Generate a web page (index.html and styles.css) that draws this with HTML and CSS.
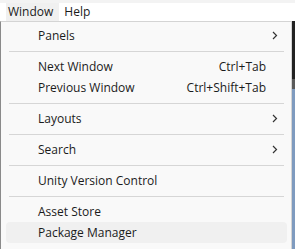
FILE: index.html
```html
<!DOCTYPE html>
<html lang="en">
<head>
    <meta charset="UTF-8" />
    <title>Window menu</title>
    <link rel="stylesheet" href="styles.css">
</head>
<body>
    <div class="top-strip"></div>
    <div class="menubar">
        <div class="menubar-item active">Window</div>
        <div class="menubar-item">Help</div>
    </div>

    <div class="workspace">
        <div class="menu">
            <div class="menu-item">
                <span class="label">Panels</span>
                <svg class="chevron" width="6" height="9" viewBox="0 0 6 9"><path d="M1 1 L4.5 4.5 L1 8" fill="none" stroke="#333" stroke-width="1.2"/></svg>
            </div>
            <div class="separator"></div>
            <div class="menu-item">
                <span class="label">Next Window</span>
                <span class="shortcut">Ctrl+Tab</span>
            </div>
            <div class="menu-item">
                <span class="label">Previous Window</span>
                <span class="shortcut">Ctrl+Shift+Tab</span>
            </div>
            <div class="separator"></div>
            <div class="menu-item">
                <span class="label">Layouts</span>
                <svg class="chevron" width="6" height="9" viewBox="0 0 6 9"><path d="M1 1 L4.5 4.5 L1 8" fill="none" stroke="#333" stroke-width="1.2"/></svg>
            </div>
            <div class="separator"></div>
            <div class="menu-item">
                <span class="label">Search</span>
                <svg class="chevron" width="6" height="9" viewBox="0 0 6 9"><path d="M1 1 L4.5 4.5 L1 8" fill="none" stroke="#333" stroke-width="1.2"/></svg>
            </div>
            <div class="separator"></div>
            <div class="menu-item">
                <span class="label">Unity Version Control</span>
            </div>
            <div class="separator"></div>
            <div class="menu-item">
                <span class="label">Asset Store</span>
            </div>
            <div class="menu-item hover">
                <span class="label">Package Manager</span>
            </div>
        </div>

        <div class="side">
            <div class="side-dark"></div>
            <div class="side-gap"></div>
            <div class="side-blue"></div>
        </div>
    </div>
</body>
</html>
```

FILE: styles.css
```css
* {
    margin: 0;
    padding: 0;
    box-sizing: border-box;
}

body {
    font-family: 'Open Sans', 'Noto Sans', sans-serif;
    font-size: 12px;
    color: #1b1b1b;
    background: #ffffff;
    width: 295px;
    height: 249px;
    overflow: hidden;
}

.top-strip {
    height: 3px;
    background: #f3f3f3;
}

/* Menu bar */
.menubar {
    display: flex;
    height: 18px;
    padding-left: 6px;
    background: #ffffff;
}

.menubar-item {
    padding: 0 6px 0 2px;
    line-height: 18px;
}

.menubar-item.active {
    background: #f0f0f0;
}

.menubar-item + .menubar-item {
    padding-left: 5px;
}

/* Dropdown */
.workspace {
    display: flex;
    height: 228px;
}

.menu {
    width: 292px;
    background: #f9f9f9;
    border: 1px solid #d4d4d4;
    border-left-color: #8a8a8a;
    border-bottom: none;
    padding: 3px 4px 0 5px;
}

.menu-item {
    display: flex;
    align-items: center;
    height: 21px;
    padding: 0 9px 0 32px;
    border-radius: 4px;
}

.menu-item .label {
    flex: 1;
}

.shortcut {
    padding-right: 12px;
}

.chevron {
    display: block;
}

.menu-item.hover {
    background: #f0f0f0;
}

.separator {
    height: 1px;
    margin: 5px 3px 4px;
    background: #d6d6d6;
}

/* window behind the menu */
.side {
    flex: 1;
    display: flex;
    flex-direction: column;
}

.side-dark {
    height: 58px;
    background: #222222;
}

.side-gap {
    height: 10px;
    background: #5a5a5a;
}

.side-blue {
    flex: 1;
    background: #7f9bbf;
}
```
